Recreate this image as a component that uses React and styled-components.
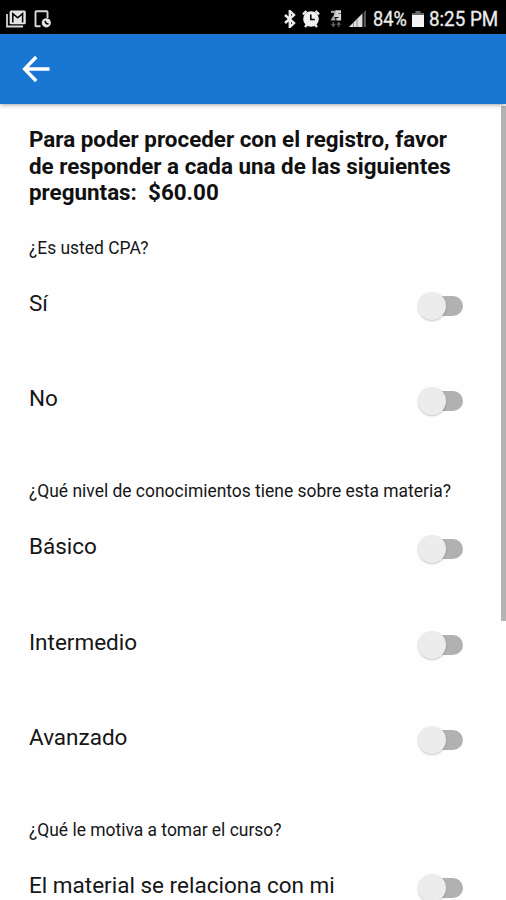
import styled, { createGlobalStyle } from 'styled-components';

//region [[ Styles ]]
const GlobalStyle = createGlobalStyle`
    * {
        box-sizing: border-box;
    }

    body {
        margin: 0;
        overflow: hidden;
        font-family: Roboto, 'Liberation Sans', sans-serif;
        color: #161616;
        background-color: #fefefe;
    }
`;

const Screen = styled.div`
    position: relative;
    height: 900px;
    overflow: hidden;
    display: flex;
    flex-direction: column;
`;

const StatusBar = styled.div`
    flex: none;
    height: 34px;
    padding: 3px 9px 0 5px;
    background-color: #000000;
    color: #ececec;

    display: flex;
    align-items: center;

    svg {
        flex: none;
        display: block;
    }
`;

const StatusGroup = styled.div`
    display: flex;
    align-items: center;
    gap: ${({ $gap }) => $gap}px;
    margin-left: ${({ $end }) => ($end ? 'auto' : 0)};
`;

const StatusText = styled.span`
    width: ${({ $width }) => $width}px;
    margin-left: ${({ $shift }) => $shift || 0}px;
    font-size: 20px;
    line-height: 24px;
    white-space: nowrap;

    span {
        display: inline-block;
        transform: scaleX(${({ $scale }) => $scale});
        transform-origin: left;
        -webkit-text-stroke: 0.3px currentColor;
    }
`;

const AppBar = styled.header`
    position: relative;
    z-index: 1;
    flex: none;
    height: 70px;
    padding-left: 22px;
    background-color: #1976d2;
    box-shadow: 0 1px 4px rgba(0, 0, 0, 0.35);

    display: flex;
    align-items: center;
`;

const BackButton = styled.button`
    padding: 0;
    border: 0;
    background: none;

    svg {
        display: block;
    }
`;

const Content = styled.main`
    flex: 1;
    min-height: 0;
    padding: 22px 43px 0 29px;
    overflow: hidden;
`;

const Title = styled.h1`
    margin: 0 0 31px;
    font-size: 22.4px;
    font-weight: 700;
    line-height: 26.7px;
    color: #101010;
    white-space: pre-line;
`;

const Question = styled.p`
    height: 51.5px;
    margin: 0;
    font-size: 17.45px;
    line-height: 23px;
    white-space: nowrap;
`;

const OptionRow = styled.label`
    height: 95.85px;

    display: flex;
    align-items: flex-start;
    justify-content: space-between;
`;

const OptionText = styled.span`
    font-size: 22.5px;
    line-height: 28px;
`;

const Track = styled.span`
    width: 44px;
    height: 20px;
    margin-top: 7px;
    border-radius: 10px;
    background-color: #b1b1b1;

    display: flex;
    align-items: center;
`;

const Thumb = styled.span`
    flex: none;
    width: 28px;
    height: 28px;
    margin-left: -1px;
    border-radius: 50%;
    background-color: #ececec;
    box-shadow: 0 1px 2px rgba(0, 0, 0, 0.22);
`;

const ScrollThumb = styled.div`
    position: absolute;
    top: 106px;
    right: 0;
    width: 5px;
    height: 515px;
    background-color: #b3b3b3;
`;
//endregion [[ Styles ]]

const sections = [
    {
        question: '¿Es usted CPA?',
        options: ['Sí', 'No'],
    },
    {
        question: '¿Qué nivel de conocimientos tiene sobre esta materia?',
        options: ['Básico', 'Intermedio', 'Avanzado'],
    },
    {
        question: '¿Qué le motiva a tomar el curso?',
        options: ['El material se relaciona con mi'],
    },
];

function MailStackIcon() {
    return (
        <svg width="22" height="18" viewBox="0 0 22 18" fill="none">
            <path d="M2 4v12.5h16" stroke="#d8d8d8" strokeWidth="1.8" />
            <rect x="4.6" y="0.6" width="16.2" height="13.6" rx="1.5" fill="#e4e4e4" />
            <path d="M7.8 12.4V3.6l4.9 4.2 4.9-4.2v8.8" stroke="#000" strokeWidth="1.5" />
        </svg>
    );
}

function PhoneSyncIcon() {
    return (
        <svg width="18" height="18" viewBox="0 0 18 18" fill="none">
            <path
                d="M6.5 16.2H2.3a.8.8 0 0 1-.8-.8V2a.8.8 0 0 1 .8-.8h10.4a.8.8 0 0 1 .8.8v6"
                stroke="#d8d8d8"
                strokeWidth="1.9"
            />
            <circle cx="12.3" cy="12.8" r="4.6" fill="#e4e4e4" />
            <path d="M10.8 11l1.5 2.5 2.2.4" stroke="#000" strokeWidth="1.5" />
        </svg>
    );
}

function BluetoothIcon() {
    return (
        <svg width="12" height="18" viewBox="0 0 12 18" fill="none">
            <path
                d="M1 5l9 8-4.2 4V1L10 5l-9 8"
                stroke="#ededed"
                strokeWidth="2.4"
            />
        </svg>
    );
}

function AlarmIcon() {
    return (
        <svg width="18" height="18" viewBox="0 0 18 18" fill="none">
            <path d="M1 4.4L4.5 1M17 4.4L13.5 1M3 17l2.5-3M15 17l-2.5-3" stroke="#ededed" strokeWidth="2.4" />
            <circle cx="9" cy="9" r="7.8" fill="#f0f0f0" />
            <path d="M8.8 4.5v5h4" stroke="#000" strokeWidth="1.6" />
        </svg>
    );
}

function NetworkIcon() {
    return (
        <svg width="17" height="18" viewBox="-4 0 17 18" fill="none">
            <path d="M1 1.8h4v3.4L2.4 9.3h3" stroke="#a0a0a0" strokeWidth="2.2" />
            <path d="M11 1.6H6.8v3.2h3v4.4H6.4M4.6 5.6h5" stroke="#d4d4d4" strokeWidth="2.6" />
            <path d="M3.3 12v4M1.5 14l1.8 2.2L5.1 14M8.7 17v-4M6.9 14.8l1.8-2.2 1.8 2.2" stroke="#606060" strokeWidth="1.3" />
        </svg>
    );
}

function SignalIcon() {
    return (
        <svg width="18" height="18" viewBox="0 0 18 18">
            <path d="M0 17L17 0v17z" fill="#555" />
            <path d="M0 17L13.5 3.5V17z" fill="#dedede" />
            <path d="M4.5 12v5M8 9v8" stroke="#777" strokeWidth=".8" />
            <path d="M14.2 2v15" stroke="#111" strokeWidth="1.2" />
        </svg>
    );
}

function BatteryIcon() {
    return (
        <svg width="12" height="18" viewBox="0 0 12 18">
            <path d="M3.5 1h5v2H12v3H0V3h3.5z" fill="#666" />
            <path d="M0 5h12v12H0z" fill="#f4f4f4" />
        </svg>
    );
}

function BackArrowIcon() {
    return (
        <svg width="29" height="28" viewBox="0 0 29 28" fill="none">
            <path d="M14.2 2L2.6 14l11.6 12M3 14h24.5" stroke="#fff" strokeWidth="3.4" />
        </svg>
    );
}

function Section({ question, options }) {
    return (
        <section>
            <Question>{question}</Question>
            {options.map((option) => (
                <OptionRow key={option}>
                    <OptionText>{option}</OptionText>
                    <Track role="switch" aria-checked="false">
                        <Thumb />
                    </Track>
                </OptionRow>
            ))}
        </section>
    );
}

function App() {
    return (
        <Screen>
            <GlobalStyle />
            <StatusBar>
                <StatusGroup $gap={7}>
                    <MailStackIcon />
                    <PhoneSyncIcon />
                </StatusGroup>
                <StatusGroup $gap={6} $end>
                    <BluetoothIcon />
                    <AlarmIcon />
                    <NetworkIcon />
                    <SignalIcon />
                    <StatusText $width={33} $scale={0.91}>
                        <span>84%</span>
                    </StatusText>
                    <BatteryIcon />
                    <StatusText $width={68} $scale={0.94} $shift={-1}>
                        <span>8:25 PM</span>
                    </StatusText>
                </StatusGroup>
            </StatusBar>
            <AppBar>
                <BackButton aria-label="Volver">
                    <BackArrowIcon />
                </BackButton>
            </AppBar>
            <Content>
                <Title>
                    {'Para poder proceder con el registro, favor\nde responder a cada una de las siguientes\npreguntas: \u00a0$60.00'}
                </Title>
                {sections.map((section) => (
                    <Section key={section.question} {...section} />
                ))}
            </Content>
            <ScrollThumb />
        </Screen>
    );
}

export default App;
